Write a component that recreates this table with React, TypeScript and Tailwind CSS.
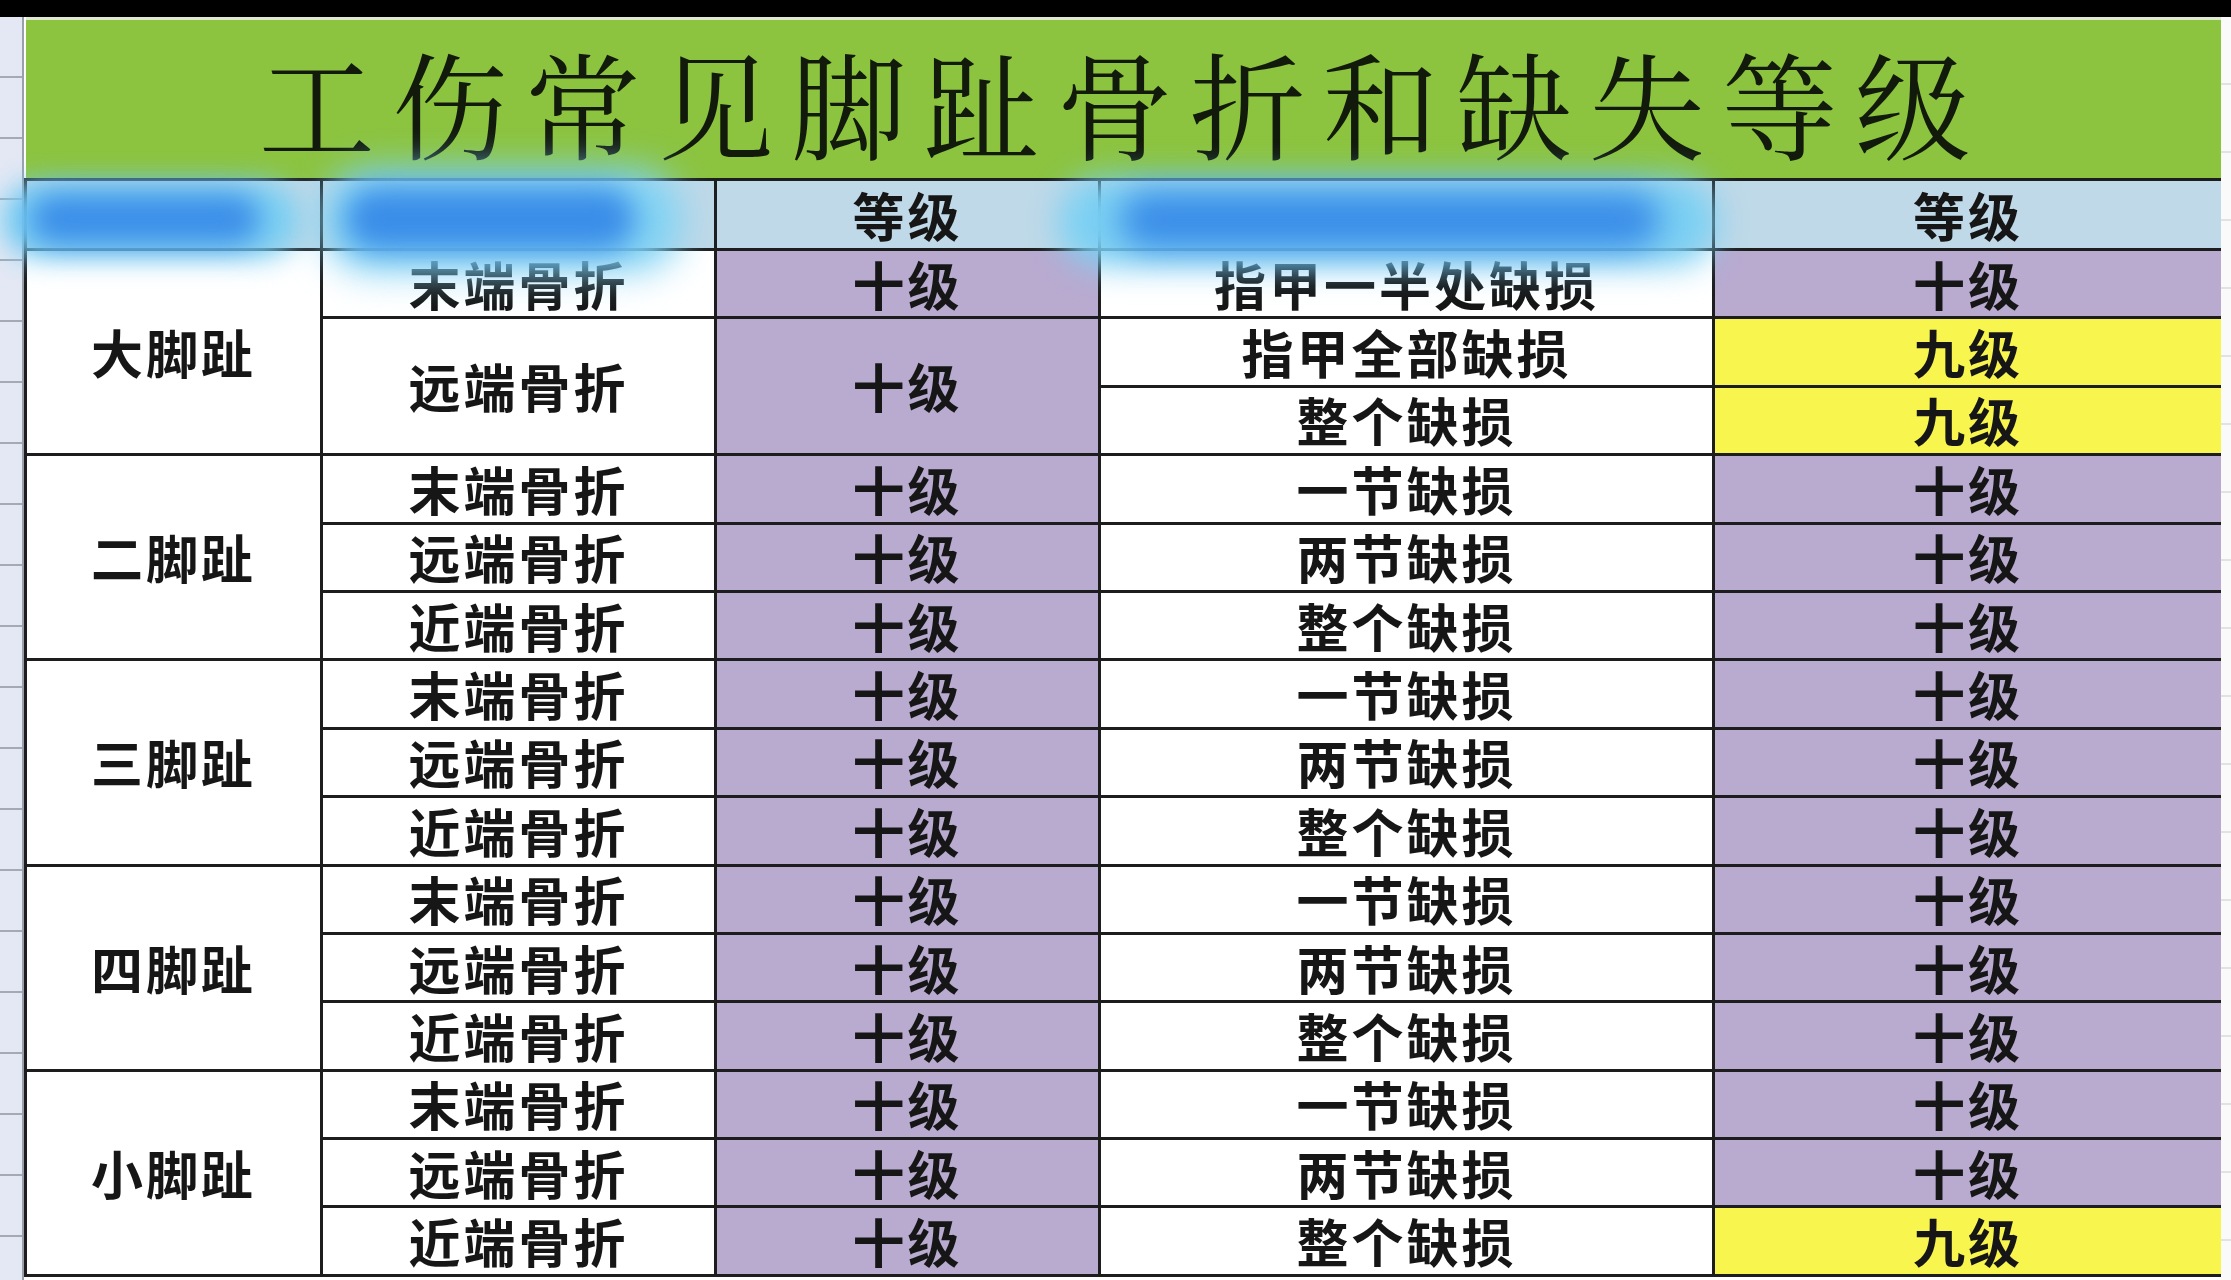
const cjk = "font-['Noto_Sans_CJK_SC','Noto_Sans_CJK_JP',sans-serif]";

type Row = { fracture?: string; span?: number; loss: string; grade: "十级" | "九级" };
type Group = { name: string; rows: Row[] };

const basic = (last: "十级" | "九级" = "十级"): Row[] => [
  { fracture: "末端骨折", loss: "一节缺损", grade: "十级" },
  { fracture: "远端骨折", loss: "两节缺损", grade: "十级" },
  { fracture: "近端骨折", loss: "整个缺损", grade: last },
];

const groups: Group[] = [
  {
    name: "大脚趾",
    rows: [
      { fracture: "末端骨折", loss: "指甲一半处缺损", grade: "十级" },
      { fracture: "远端骨折", span: 2, loss: "指甲全部缺损", grade: "九级" },
      { loss: "整个缺损", grade: "九级" },
    ],
  },
  { name: "二脚趾", rows: basic() },
  { name: "三脚趾", rows: basic() },
  { name: "四脚趾", rows: basic() },
  { name: "小脚趾", rows: basic("九级") },
];

const cell =
  "border-[3px] border-[#1d1d1d] text-center align-middle text-[52px] font-bold leading-none text-[#161616] tracking-[3px]";
const purple = "bg-[#b9aad0]";
const yellow = "bg-[#f8f64e]";
const headBlue = "bg-[#bfd9e8]";

function App() {
  return (
    <div className={`relative h-[1280px] w-[2231px] overflow-hidden bg-white ${cjk}`}>
      <div className="h-[17px] bg-black" />
      <div className="flex">
        {/* spreadsheet row headers on the left edge */}
        <div className="h-[1263px] w-[24px] border-r-2 border-[#9aa0aa] bg-[repeating-linear-gradient(to_bottom,#e4e8f4_0px,#e4e8f4_59px,#a4a9b3_59px,#a4a9b3_61px)]" />
        <div className="w-[2197px]">
          <table className="w-[2197px] table-fixed border-collapse">
            <colgroup>
              <col className="w-[296px]" />
              <col className="w-[394px]" />
              <col className="w-[384px]" />
              <col className="w-[614px]" />
              <col className="w-[509px]" />
            </colgroup>
            <tbody>
              <tr>
                <td
                  colSpan={5}
                  className="h-[161px] border-t-[3px] border-r-[3px] border-b-[3px] border-t-[#dfe9d2] border-r-[#1d1d1d] border-b-[#1d1d1d] bg-[#8cc43f] pt-[4px] text-center align-middle font-['Noto_Serif_CJK_SC','Noto_Sans_CJK_SC',serif] text-[116px] font-normal leading-none tracking-[17px] text-[#121a0c]"
                >
                  工伤常见脚趾骨折和缺失等级
                </td>
              </tr>
              <tr>
                <td className={`${cell} ${headBlue} h-[70px]`} />
                <td className={`${cell} ${headBlue}`} />
                <td className={`${cell} ${headBlue}`}>等级</td>
                <td className={`${cell} ${headBlue}`} />
                <td className={`${cell} ${headBlue}`}>等级</td>
              </tr>
              {groups.map((group) =>
                group.rows.map((row, i) => (
                  <tr key={group.name + i}>
                    {i === 0 && (
                      <td rowSpan={3} className={`${cell} bg-white`}>
                        {group.name}
                      </td>
                    )}
                    {row.fracture && (
                      <td rowSpan={row.span ?? 1} className={`${cell} h-[68.4px] bg-white`}>
                        {row.fracture}
                      </td>
                    )}
                    {row.fracture && (
                      <td rowSpan={row.span ?? 1} className={`${cell} ${purple}`}>
                        十级
                      </td>
                    )}
                    <td className={`${cell} h-[68.4px] bg-white`}>{row.loss}</td>
                    <td className={`${cell} ${row.grade === "九级" ? yellow : purple}`}>{row.grade}</td>
                  </tr>
                ))
              )}
            </tbody>
          </table>
        </div>
        <div className="h-[1263px] flex-1 bg-[repeating-linear-gradient(to_bottom,#fafafa_0px,#fafafa_66px,#e2e2e2_66px,#e2e2e2_68px)]" />
      </div>

      {/* blurred redaction marks over the header cells */}
      <div className="pointer-events-none absolute left-[0px] top-[182px] h-[76px] w-[300px] rounded-[40px] bg-[#7bd0f3] blur-[14px]" />
      <div className="pointer-events-none absolute left-[30px] top-[194px] h-[50px] w-[230px] rounded-full bg-[#3b8ee8] blur-[14px]" />
      <div className="pointer-events-none absolute left-[322px] top-[168px] h-[104px] w-[360px] rounded-[50px] bg-[#80d3f4] blur-[18px]" />
      <div className="pointer-events-none absolute left-[345px] top-[188px] h-[62px] w-[290px] rounded-full bg-[#3a8de8] blur-[14px]" />
      <div className="pointer-events-none absolute left-[1058px] top-[178px] h-[88px] w-[660px] rounded-[50px] bg-[#7bd0f3] blur-[16px]" />
      <div className="pointer-events-none absolute left-[1120px] top-[192px] h-[56px] w-[540px] rounded-full bg-[#3a8de8] blur-[16px]" />
    </div>
  );
}

export default App;
